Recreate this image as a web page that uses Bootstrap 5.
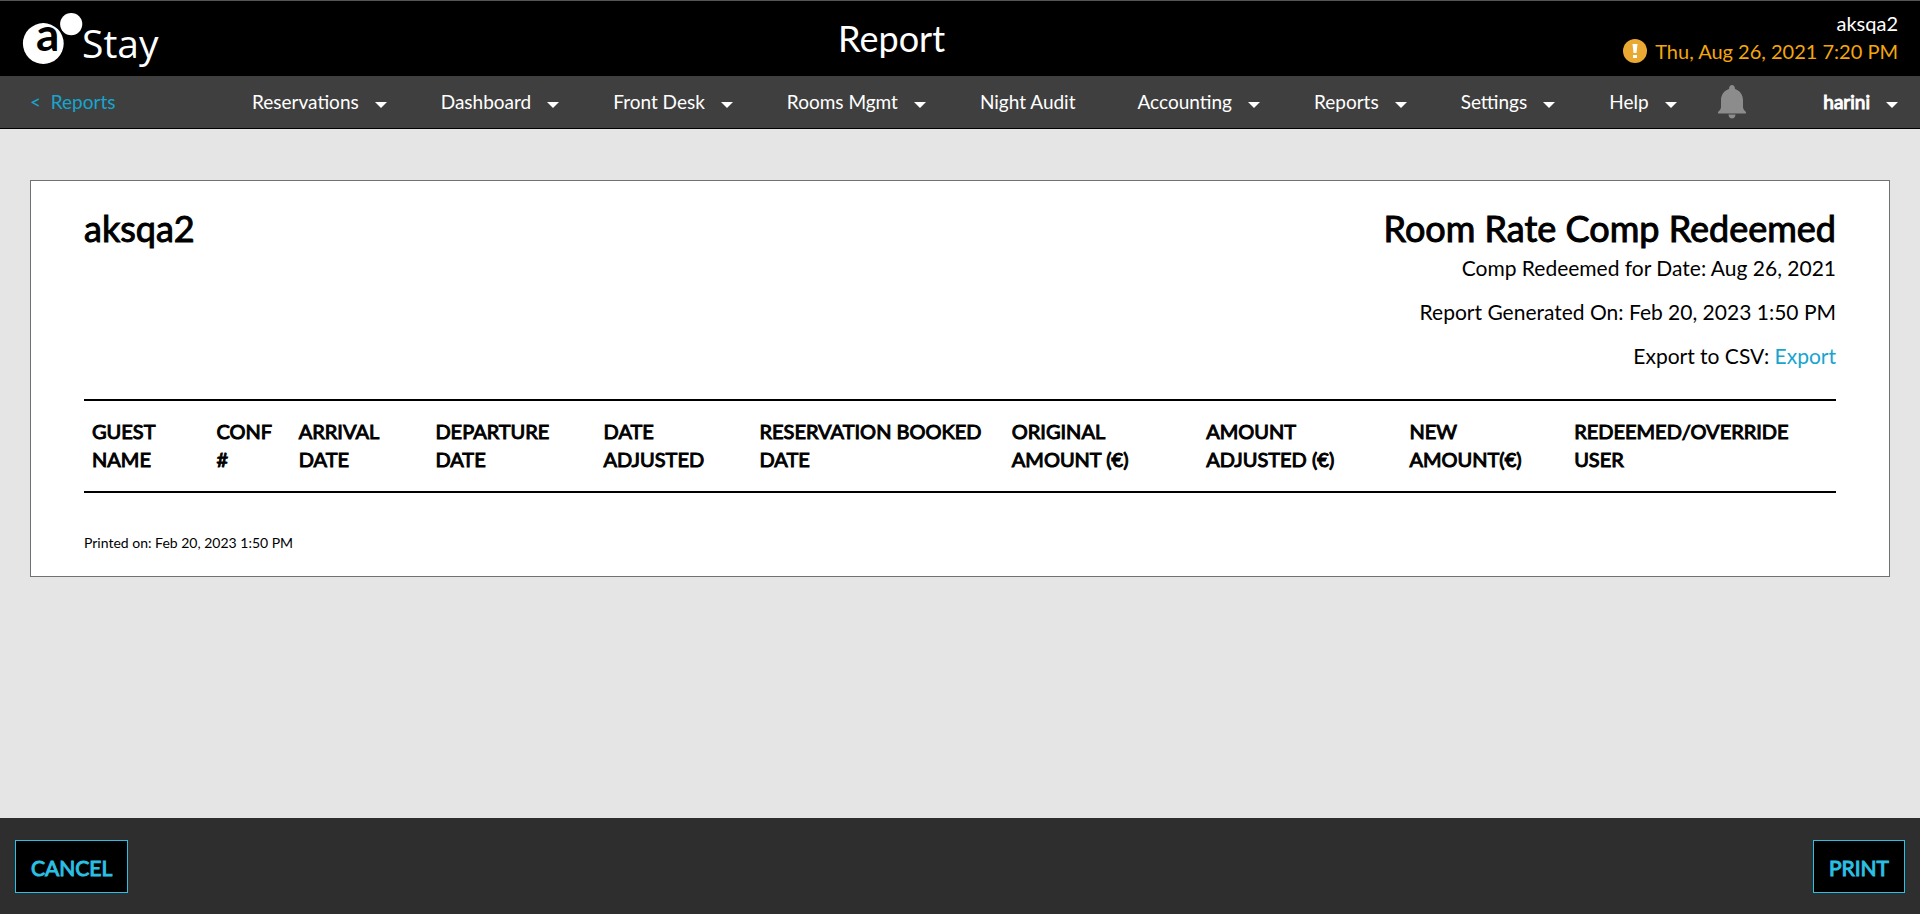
<!DOCTYPE html>
<html lang="en">
<head>
<meta charset="utf-8">
<meta name="viewport" content="width=device-width, initial-scale=1">
<title>Report</title>
<link href="https://cdn.jsdelivr.net/npm/bootstrap@5.3.0/dist/css/bootstrap.min.css" rel="stylesheet">
<style>
  body { font-family: Lato, "Liberation Sans", sans-serif; font-size: 20px; line-height: 28px; color: #000; background: #e5e5e5; }
  a { text-decoration: none; color: #17a5cf; }
  .top-bar { background: #000; color: #fff; border-top: 1px solid #555; height: 76px; padding: 0 22px 2px; }
  .page-title { font-size: 36px; line-height: 44px; font-weight: 400; }
  .property-info { padding-bottom: 2px; }
  .clock { color: #f5a60a; }
  .main-nav { background: #3f3f3f; border-bottom: 1px solid #000; height: 53px; padding: 0 22px 0 30px; font-size: 19px; }
  .main-nav .navbar-nav { gap: 54px; }
  .menu-btn { background: none; border: 0; padding: 0; color: #fff; white-space: nowrap; }
  .menu-btn.dropdown-toggle::after { border-top: 6px solid; border-right: 6px solid transparent; border-left: 6px solid transparent; margin-left: 16px; vertical-align: 1px; }
  .bell-btn { margin-left: 41px; }
  .bell-btn svg { display: block; }
  .back-link { width: 222px; }
  .faux-bold { -webkit-text-stroke: 1px currentColor; }
  .sheet { border: 1px solid #6f7273; border-radius: 0; margin: 51px 30px 0; padding: 25px 53px 23px; }
  .sheet h1 { font-size: 36px; line-height: 44px; font-weight: 400; }
  .report-info { font-size: 21px; }
  .report-table { table-layout: fixed; border-top: 2px solid #000; border-bottom: 2px solid #000; margin-top: 29px; }
  .report-table th { font-weight: 400; padding: 16px 0 18px 8px; vertical-align: top; }
  .printed { font-size: 14px; line-height: 20px; margin-top: 40px; }
  .action-bar { background: #2e2e2e; height: 96px; padding: 0 15px; }
  .action-btn { --bs-btn-color: #2bc0e4; --bs-btn-border-color: #2bc0e4; --bs-btn-bg: #000; --bs-btn-hover-bg: #111; --bs-btn-hover-color: #2bc0e4; --bs-btn-hover-border-color: #2bc0e4;
    --bs-btn-border-radius: 0; --bs-btn-font-size: 21px; --bs-btn-line-height: 30px; --bs-btn-padding-x: 15px; padding-top: 12px; padding-bottom: 9px; }
</style>
</head>
<body class="d-flex flex-column min-vh-100">
<header>
  <div class="top-bar d-flex align-items-center justify-content-between">
    <a href="#" class="d-block">
      <svg class="d-block" width="138" height="65" viewBox="0 0 138 65" role="img" aria-label="a Stay">
        <circle cx="21.300" cy="38.500" r="20.400" fill="#fff"/>
        <circle cx="49.200" cy="19.100" r="12.500" fill="#000"/>
        <circle cx="49.200" cy="19.100" r="11.100" fill="#fff"/>
        <text x="14" y="46" font-family="Lato, sans-serif" font-size="46" font-weight="700">a</text>
        <text x="60" y="53" font-family="Open Sans, sans-serif" font-size="39" fill="#fff">Stay</text>
      </svg>
    </a>
    <div class="page-title">Report</div>
    <div class="property-info text-end">
      <div>aksqa2</div>
      <div class="clock d-flex justify-content-end align-items-center">
        <svg class="me-2" width="24" height="24" viewBox="0 0 24 24" aria-hidden="true"><circle cx="12" cy="12" r="12" fill="#e9a933"/><path d="M9.500 5h5l-1 9h-3zM10 16h4v3h-4z" fill="#fff"/></svg>
        <span>Thu, Aug 26, 2021 7:20 PM</span>
      </div>
    </div>
  </div>
  <nav class="main-nav navbar navbar-expand flex-nowrap">
    <a class="back-link" href="#">&lt;&nbsp; Reports</a>
    <div class="navbar-nav align-items-center">
      <button class="menu-btn dropdown-toggle" type="button">Reservations</button>
      <button class="menu-btn dropdown-toggle" type="button">Dashboard</button>
      <button class="menu-btn dropdown-toggle" type="button">Front Desk</button>
      <button class="menu-btn dropdown-toggle" type="button">Rooms Mgmt</button>
      <button class="menu-btn me-2" type="button">Night Audit</button>
      <button class="menu-btn dropdown-toggle" type="button">Accounting</button>
      <button class="menu-btn dropdown-toggle" type="button">Reports</button>
      <button class="menu-btn dropdown-toggle" type="button">Settings</button>
      <button class="menu-btn dropdown-toggle" type="button">Help</button>
    </div>
    <button class="menu-btn bell-btn" type="button" aria-label="Notifications">
      <svg width="28" height="34" viewBox="0 0 28 34" fill="#8c8c8c"><path d="M11 4C11-1.300 17-1.300 17 4c5 1.500 8 6 8 11v7c0 2 1 3 3 5v1.500H0V27c2-2 3-3 3-5v-7c0-5 3-9.500 8-11zM10.500 29.500h7c0 5.300-7 5.300-7 0z"/></svg>
    </button>
    <button class="menu-btn dropdown-toggle ms-auto" type="button"><span class="faux-bold">harini</span></button>
  </nav>
</header>
<main class="flex-grow-1">
  <section class="sheet card">
    <div class="d-flex justify-content-between">
      <h1 class="faux-bold mb-0">aksqa2</h1>
      <div class="report-info text-end">
        <h1 class="faux-bold mb-1">Room Rate Comp Redeemed</h1>
        <p class="mb-3">Comp Redeemed for Date: Aug 26, 2021</p>
        <p class="mb-3">Report Generated On: Feb 20, 2023 1:50 PM</p>
        <p class="mb-0">Export to CSV: <a href="#">Export</a></p>
      </div>
    </div>
    <table class="report-table w-100">
      <colgroup>
        <col style="width:7.1%"><col style="width:4.7%"><col style="width:7.8%"><col style="width:9.6%"><col style="width:8.9%"><col style="width:14.4%"><col style="width:11.1%"><col style="width:11.6%"><col style="width:9.4%"><col style="width:15.4%">
      </colgroup>
      <thead>
        <tr class="faux-bold">
          <th scope="col">GUEST<br>NAME</th><th scope="col">CONF<br>#</th><th scope="col">ARRIVAL<br>DATE</th><th scope="col">DEPARTURE<br>DATE</th><th scope="col">DATE<br>ADJUSTED</th><th scope="col">RESERVATION BOOKED<br>DATE</th><th scope="col">ORIGINAL<br>AMOUNT (€)</th><th scope="col">AMOUNT<br>ADJUSTED (€)</th><th scope="col">NEW<br>AMOUNT(€)</th><th scope="col">REDEEMED/OVERRIDE<br>USER</th>
        </tr>
      </thead>
    </table>
    <p class="printed mb-0">Printed on: Feb 20, 2023 1:50 PM</p>
  </section>
</main>
<footer class="action-bar d-flex align-items-center justify-content-between">
  <button class="btn action-btn faux-bold" type="button">CANCEL</button>
  <button class="btn action-btn faux-bold" type="button">PRINT</button>
</footer>
<script src="https://cdn.jsdelivr.net/npm/bootstrap@5.3.0/dist/js/bootstrap.bundle.min.js"></script>
</body>
</html>
